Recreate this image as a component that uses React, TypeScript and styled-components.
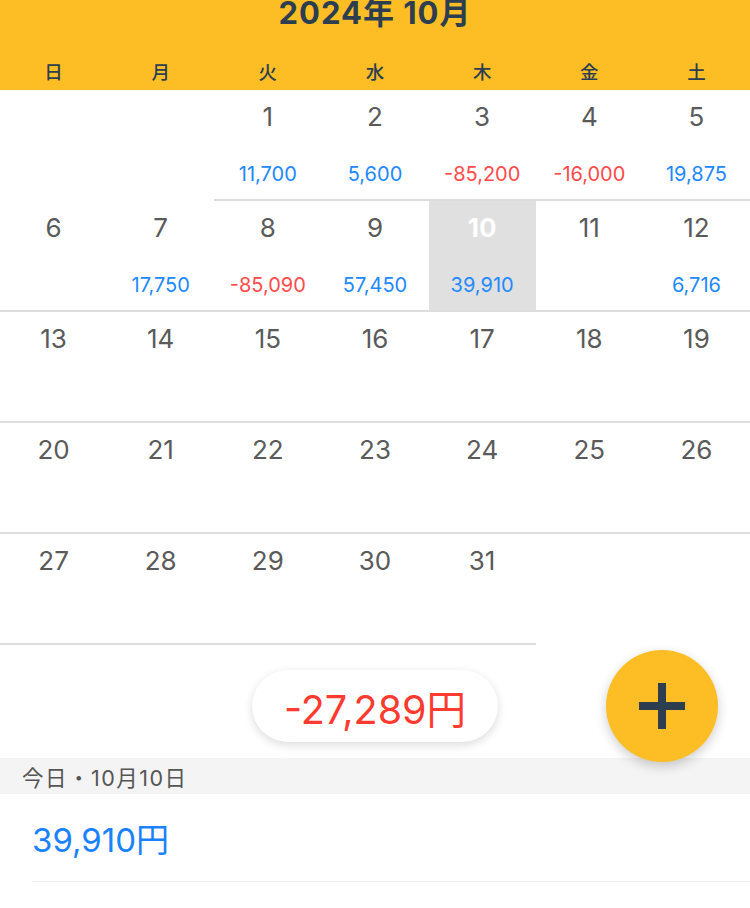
import styled, {createGlobalStyle} from "styled-components";

const GlobalStyle = createGlobalStyle`
    html, body {
        margin: 0;
        padding: 0;
        background: #ffffff;
        font-family: "Inter", "Noto Sans CJK JP", sans-serif;
    }
`;

const Page = styled.div`
    width: 750px;
    height: 908px;
    overflow: hidden;
    background: #ffffff;
`;

const Header = styled.header`
    background-color: #fdbe25;
    height: 90px;
    display: flex;
    flex-direction: column;
`;

const Title = styled.h1`
    margin: -2px 0 0;
    height: 54px;
    font-size: 31px;
    line-height: 30px;
    font-weight: 700;
    color: #2c3e50;
    text-align: center;
    letter-spacing: 1px;
`;

const WeekRow = styled.div`
    display: grid;
    grid-template-columns: repeat(7, 1fr);
    align-items: center;
    flex: 1;
`;

const WeekDay = styled.span`
    text-align: center;
    font-family: "Noto Sans CJK JP", sans-serif;
    font-size: 18.5px;
    font-weight: 500;
    color: #2c3e50;
    margin-top: -1px;
`;

const Grid = styled.div`
    display: grid;
    grid-template-columns: repeat(7, 1fr);
`;

const Cell = styled.div<{ $empty?: boolean; $today?: boolean }>`
    height: 109px;
    border-bottom: 2px solid ${p => (p.$empty ? "transparent" : "#dddddd")};
    background: ${p => (p.$today ? "#e0e0e0" : "transparent")};
    display: flex;
    flex-direction: column;
    align-items: center;
`;

const DayNum = styled.span<{ $today?: boolean }>`
    margin-top: 12px;
    font-size: 26px;
    line-height: 30px;
    font-weight: ${p => (p.$today ? 700 : 400)};
    color: ${p => (p.$today ? "#ffffff" : "#5a5a5a")};
`;

const Amount = styled.span<{ $minus?: boolean }>`
    margin-top: 30px;
    font-size: 20px;
    line-height: 24px;
    color: ${p => (p.$minus ? "#ff4b4b" : "#2189ff")};
`;

const Footer = styled.div`
    position: relative;
    height: 113px;
    display: flex;
    justify-content: center;
    align-items: flex-start;
    padding-top: 25px;
    box-sizing: border-box;
`;

const TotalPill = styled.div`
    height: 72px;
    padding: 0 32px;
    border-radius: 36px;
    background: #ffffff;
    box-shadow: 0 3px 10px rgba(0, 0, 0, 0.14);
    display: flex;
    align-items: center;
    font-size: 39.5px;
    color: #ff3b30;
`;

const Fab = styled.button`
    position: absolute;
    right: 32px;
    top: 5px;
    width: 112px;
    height: 112px;
    border: none;
    border-radius: 50%;
    background: #fdbe25;
    box-shadow: 0 4px 12px rgba(0, 0, 0, 0.2);
    display: flex;
    align-items: center;
    justify-content: center;
    z-index: 2;
    padding: 0;
`;

const SectionHead = styled.div`
    height: 36px;
    background: #f4f4f4;
    display: flex;
    align-items: center;
    padding-left: 22px;
    font-size: 21.5px;
    letter-spacing: 1.5px;
    color: #555555;
`;

const EntryRow = styled.div`
    margin-left: 32px;
    height: 87px;
    display: flex;
    align-items: center;
    border-bottom: 1px solid #eeeeee;
    font-size: 33px;
    color: #1a82ff;
`;

type Day = { d: number; amt?: number };

const amounts: Record<number, number> = {
    1: 11700, 2: 5600, 3: -85200, 4: -16000, 5: 19875,
    7: 17750, 8: -85090, 9: 57450, 10: 39910, 12: 6716,
};

const weekDays = ["日", "月", "火", "水", "木", "金", "土"];

function buildCells(): (Day | null)[] {
    const cells: (Day | null)[] = [null, null];
    for (let d = 1; d <= 31; d++) cells.push({d, amt: amounts[d]});
    while (cells.length % 7) cells.push(null);
    return cells;
}

const fmt = (n: number) => n.toLocaleString("en-US");

function Plus() {
    return <svg width="46" height="46" viewBox="0 0 46 46">
        <rect x="19" y="0" width="8" height="46" fill="#2c3e50"/>
        <rect x="0" y="19" width="46" height="8" fill="#2c3e50"/>
    </svg>
}

export default function App() {
    const cells = buildCells();
    return <Page>
        <GlobalStyle/>
        <Header>
            <Title>2024年 10月</Title>
            <WeekRow>
                {weekDays.map(w => <WeekDay key={w}>{w}</WeekDay>)}
            </WeekRow>
        </Header>

        <Grid>
            {cells.map((c, i) => c ? (
                <Cell key={i} $today={c.d === 10}>
                    <DayNum $today={c.d === 10}>{c.d}</DayNum>
                    {c.amt !== undefined && <Amount $minus={c.amt < 0}>{fmt(c.amt)}</Amount>}
                </Cell>
            ) : <Cell key={i} $empty/>)}
        </Grid>

        <Footer>
            <TotalPill>-27,289円</TotalPill>
            <Fab aria-label="追加"><Plus/></Fab>
        </Footer>

        <SectionHead>今日・10月10日</SectionHead>
        <EntryRow>39,910円</EntryRow>
    </Page>
}
